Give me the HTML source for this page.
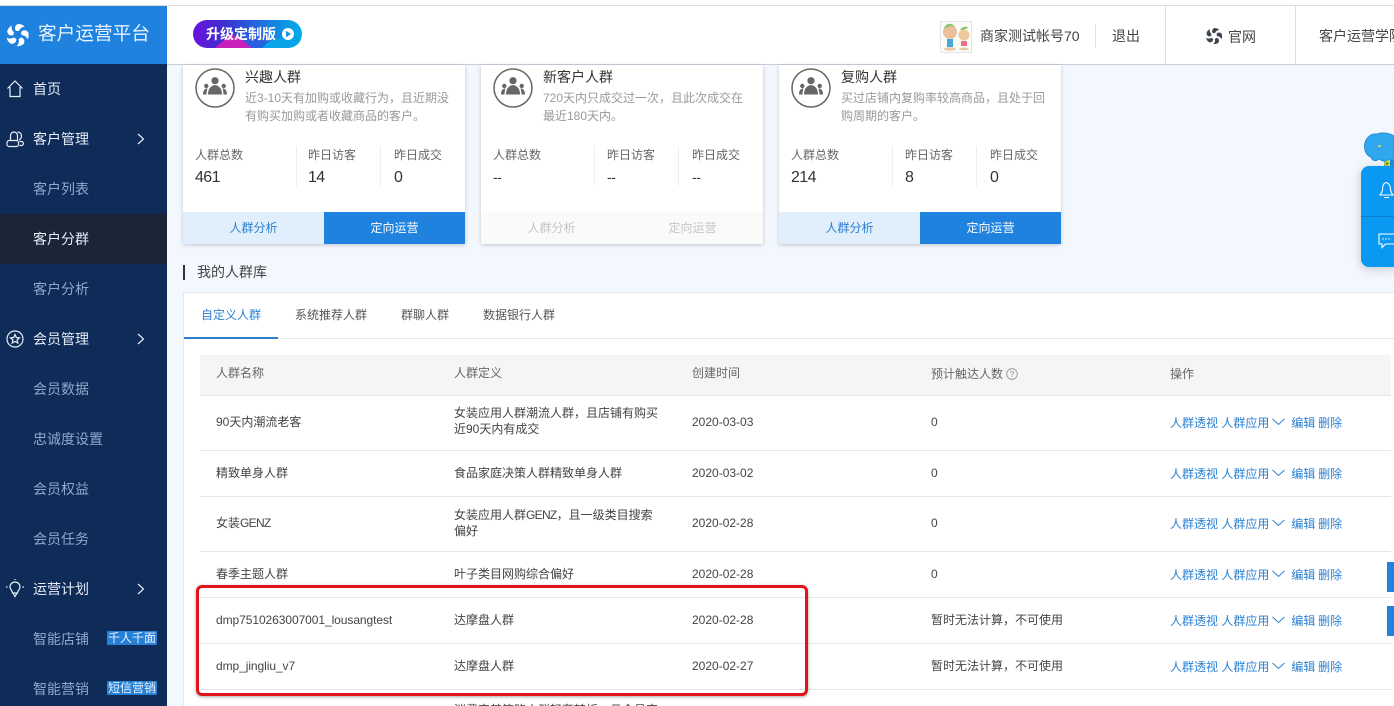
<!DOCTYPE html>
<html lang="zh"><head><meta charset="utf-8"><title>客户分群</title>
<style>
*{box-sizing:border-box;margin:0;padding:0}
html,body{width:1394px;height:706px;overflow:hidden;background:#f3f7fe}
body{position:relative;font-family:"Liberation Sans","Noto Sans CJK SC",sans-serif;font-size:12px;color:#333}
.a,.t{position:absolute;white-space:nowrap}
.t{line-height:18px}
svg{position:absolute;overflow:visible}
.side{font-size:14px;color:#8fa8cb;left:33px}
.side.w{color:#e6edf7}
.card{position:absolute;top:65px;width:282px;height:179px;background:#fff;box-shadow:0 1px 4px rgba(0,0,0,.2)}
.card .t{position:absolute}
.ttl{font-size:14px;color:#333;left:62px;top:3px}
.desc{color:#999;left:62px;white-space:nowrap}
.lb{color:#666;top:81px}
.nm{font-size:16px;color:#333;top:103px;letter-spacing:-.6px;line-height:20px}
.nm.d{font-size:14px;letter-spacing:-.4px;top:102px}
.dv{position:absolute;top:81px;width:1px;height:40px;background:#eee}
.b1,.b2{position:absolute;top:147px;height:32px;line-height:32px;text-align:center}
.b1{left:0;width:141px;background:#e1eefb;color:#2f80d0}
.b2{left:141px;width:141px;background:#1f82de;color:#fff}
.off .b1,.off .b2{background:#fafafa;color:#c4c4c4}
.line{position:absolute;left:200px;width:1191px;height:1px;background:#e6e6e6}
.c{color:#444;font-size:12px}
.n{letter-spacing:-.7px}
.op{position:absolute;left:1170px;color:#2b82d4;white-space:nowrap;line-height:18px}
.op span{margin-left:22px;word-spacing:-.5px}
.tag{position:absolute;left:107px;width:50px;height:14px;background:#2680d6;color:#e8f2fc;font-size:12px;line-height:14px;text-align:center;border-radius:1px}
.ic{stroke:#e8eef7;fill:none;stroke-width:1.2}
</style></head><body>

<div class="a" style="left:0;top:0;width:1394px;height:6px;background:#fff;border-bottom:1px solid #ddd"></div>
<div class="a" style="left:167px;top:6px;width:1227px;height:59px;background:#fff;border-bottom:1px solid #ccd"></div>

<div class="a" style="left:0;top:6px;width:167px;height:58px;background:#1f82de"></div>
<div class="a" style="left:0;top:64px;width:167px;height:642px;background:#0f2c58"></div>
<div class="a" style="left:0;top:214px;width:167px;height:50px;background:#1a2538"></div>

<svg style="left:6px;top:24px" width="23" height="22" viewBox="-11.500 -11.500 23 23" fill="#fff">
<path d="M-1.500-4.200C-3.500-6.500-3-10 .5-11.500 3.500-11.500 6-10.500 7.500-8.800 4.800-8.500 2.500-6.800 1.500-4.200Z"/>
<path d="M-1.500-4.200C-3.500-6.500-3-10 .5-11.500 3.500-11.500 6-10.500 7.500-8.800 4.800-8.500 2.500-6.800 1.500-4.200Z" transform="rotate(72)"/>
<path d="M-1.500-4.200C-3.500-6.500-3-10 .5-11.500 3.500-11.500 6-10.500 7.500-8.800 4.800-8.500 2.500-6.800 1.500-4.200Z" transform="rotate(144)"/>
<path d="M-1.500-4.200C-3.500-6.500-3-10 .5-11.500 3.500-11.500 6-10.500 7.500-8.800 4.800-8.500 2.500-6.800 1.500-4.200Z" transform="rotate(216)"/>
<path d="M-1.500-4.200C-3.500-6.500-3-10 .5-11.500 3.500-11.500 6-10.500 7.500-8.800 4.800-8.500 2.500-6.800 1.500-4.200Z" transform="rotate(288)"/></svg>
<div class="t" style="left:38px;top:22px;font-size:18.670px;line-height:24px;color:#e8f2fc">客户运营平台</div>

<svg style="left:7px;top:80px" width="16" height="18" viewBox="0 0 16 18"><path class="ic" d="M.5 8.500L8 1l7.500 7.500M3 7v9.500h10V7"/></svg>
<div class="t side w" style="top:80px">首页</div>
<svg style="left:6px;top:130px" width="18" height="18" viewBox="0 0 18 18"><path class="ic" d="M4.500 10V5.500a3.500 3.500 0 0 1 7 0V10M3 10.500h7.500c2.800 0 2.800 6 0 6H3c-2.800 0-2.800-6 0-6zM11.500 2c2.500 0 4 1.800 4 4 0 1.800-.8 3.200-2.500 4M13.500 11.500h2c2.500 0 2.500 4 0 4h-2"/></svg>
<div class="t side w" style="top:130px">客户管理</div>
<svg style="left:137px;top:133px" width="8" height="12" viewBox="0 0 8 12"><path class="ic" d="M1 1l5.500 5L1 11"/></svg>
<div class="t side" style="top:180px">客户列表</div>
<div class="t side w" style="top:230px">客户分群</div>
<div class="t side" style="top:280px">客户分析</div>
<svg style="left:6px;top:330px" width="18" height="18" viewBox="0 0 18 18"><circle class="ic" cx="9" cy="9" r="8"/><path class="ic" d="M9 4.500l1.300 3 3.200.3-2.400 2.100.7 3.100L9 11.400 6.200 13l.7-3.100-2.400-2.100 3.200-.3z"/></svg>
<div class="t side w" style="top:330px">会员管理</div>
<svg style="left:137px;top:333px" width="8" height="12" viewBox="0 0 8 12"><path class="ic" d="M1 1l5.500 5L1 11"/></svg>
<div class="t side" style="top:380px">会员数据</div>
<div class="t side" style="top:430px">忠诚度设置</div>
<div class="t side" style="top:480px">会员权益</div>
<div class="t side" style="top:530px">会员任务</div>
<svg style="left:6px;top:580px" width="18" height="18" viewBox="0 0 18 18"><path class="ic" d="M6.500 13c0-2.500-2.500-3.500-2.500-6a5 5 0 0 1 10 0c0 2.500-2.500 3.500-2.500 6zM7 13l2 3.500 2-3.500M9 -1v1M0 7h1.500M16.500 7H18"/></svg>
<div class="t side w" style="top:580px">运营计划</div>
<svg style="left:137px;top:583px" width="8" height="12" viewBox="0 0 8 12"><path class="ic" d="M1 1l5.500 5L1 11"/></svg>
<div class="t side" style="top:630px">智能店铺</div>
<div class="tag" style="top:631px">千人千面</div>
<div class="t side" style="top:680px">智能营销</div>
<div class="tag" style="top:681px">短信营销</div>

<svg style="left:193px;top:20px" width="109" height="28" viewBox="0 0 109 28"><defs><linearGradient id="g" x1="0" x2="1" y1="0" y2="0"><stop offset="0" stop-color="#6a12dc"/><stop offset=".3" stop-color="#3a30d0"/><stop offset=".6" stop-color="#1f6cdc"/><stop offset="1" stop-color="#04aeea"/></linearGradient><clipPath id="cp"><rect width="109" height="28" rx="14"/></clipPath></defs><g clip-path="url(#cp)"><rect width="109" height="28" fill="url(#g)"/><path d="M22 28L38 14l12 6 10 8z" fill="#c820b8"/><path d="M45 16L62 6l20 12-16 10H58z" fill="#2a5ce0" opacity=".8"/><path d="M70 28C75 18 90 16 109 20v8z" fill="#08a4e8"/></g><circle cx="95" cy="14" r="6" fill="#fff"/><path d="M93 10.800v6.400l5-3.200z" fill="#1890e0"/></svg>
<div class="t" style="left:206px;top:25px;font-size:14px;font-weight:bold;color:#fff">升级定制版</div>

<svg style="left:940px;top:21px" width="32" height="32" viewBox="0 0 32 32"><rect x=".5" y=".5" width="31" height="31" fill="#fbfbf8" stroke="#e6e6e6"/><circle cx="10" cy="11" r="7" fill="#ecc09a"/><path d="M4 8c1-6 8-7 11-2-3-1-7-1-11 2z" fill="#8cc56a"/><rect x="7" y="18" width="6" height="8" fill="#45a8d8"/><ellipse cx="10" cy="28" rx="6" ry="1.800" fill="#e8ccaa"/><circle cx="24" cy="14" r="5.500" fill="#f0c8a0"/><path d="M20 9c1-2 5-4 8-3-1 2-5 3-8 3z" fill="#7cc060"/><rect x="21" y="20" width="6" height="5" fill="#ea7088"/><ellipse cx="24" cy="28" rx="5" ry="1.500" fill="#e8ccaa"/></svg>
<div class="t" style="left:980px;top:27px;font-size:14px;color:#444">商家测试帐号70</div>
<div class="a" style="left:1095px;top:24px;width:1px;height:24px;background:#e3e3e3"></div>
<div class="t" style="left:1112px;top:27px;font-size:14px;color:#444">退出</div>
<div class="a" style="left:1165px;top:6px;width:1px;height:59px;background:#ddd"></div>
<div class="a" style="left:1295px;top:6px;width:1px;height:59px;background:#ddd"></div>
<svg style="left:1206px;top:28px" width="16" height="16" viewBox="-11.500 -11.500 23 23" fill="#3d4450">
<path d="M-1.500-4.200C-3.500-6.500-3-10 .5-11.500 3.500-11.500 6-10.500 7.500-8.800 4.800-8.500 2.500-6.800 1.500-4.200Z"/>
<path d="M-1.500-4.200C-3.500-6.500-3-10 .5-11.500 3.500-11.500 6-10.500 7.500-8.800 4.800-8.500 2.500-6.800 1.500-4.200Z" transform="rotate(72)"/>
<path d="M-1.500-4.200C-3.500-6.500-3-10 .5-11.500 3.500-11.500 6-10.500 7.500-8.800 4.800-8.500 2.500-6.800 1.500-4.200Z" transform="rotate(144)"/>
<path d="M-1.500-4.200C-3.500-6.500-3-10 .5-11.500 3.500-11.500 6-10.500 7.500-8.800 4.800-8.500 2.500-6.800 1.500-4.200Z" transform="rotate(216)"/>
<path d="M-1.500-4.200C-3.500-6.500-3-10 .5-11.500 3.500-11.500 6-10.500 7.500-8.800 4.800-8.500 2.500-6.800 1.500-4.200Z" transform="rotate(288)"/></svg>
<div class="t" style="left:1228px;top:28px;font-size:14px;color:#444">官网</div>
<div class="t" style="left:1319px;top:27px;font-size:14px;color:#444">客户运营学院</div>

<div class="card" style="left:183px">
<svg style="left:12px;top:3px" width="40" height="40" viewBox="0 0 40 40"><circle cx="20" cy="20" r="19" fill="none" stroke="#666" stroke-width="1.500"/><circle cx="20" cy="12.700" r="3.600" fill="#666"/><path d="M13 26.500C13 14 27 14 27 26.500z" fill="#666"/><circle cx="11.300" cy="18" r="2.200" fill="#666"/><path d="M8 26.500c0-4.500 2-6 4.500-6-.5 1.500-1 3.500-1 6z" fill="#666"/><circle cx="28.700" cy="18" r="2.200" fill="#666"/><path d="M32 26.500c0-4.500-2-6-4.500-6 .5 1.500 1 3.500 1 6z" fill="#666"/></svg>
<div class="t ttl">兴趣人群</div>
<div class="t desc" style="top:24px">近3-10天有加购或收藏行为，且近期没</div>
<div class="t desc" style="top:42px">有购买加购或者收藏商品的客户。</div>
<div class="t lb" style="left:12px">人群总数</div><div class="t nm" style="left:12px">461</div>
<div class="dv" style="left:113px"></div>
<div class="t lb" style="left:125px">昨日访客</div><div class="t nm" style="left:125px">14</div>
<div class="dv" style="left:197px"></div>
<div class="t lb" style="left:211px">昨日成交</div><div class="t nm" style="left:211px">0</div>
<div class="b1">人群分析</div><div class="b2">定向运营</div>
</div>

<div class="card off" style="left:481px">
<svg style="left:12px;top:3px" width="40" height="40" viewBox="0 0 40 40"><circle cx="20" cy="20" r="19" fill="none" stroke="#666" stroke-width="1.500"/><circle cx="20" cy="12.700" r="3.600" fill="#666"/><path d="M13 26.500C13 14 27 14 27 26.500z" fill="#666"/><circle cx="11.300" cy="18" r="2.200" fill="#666"/><path d="M8 26.500c0-4.500 2-6 4.500-6-.5 1.500-1 3.500-1 6z" fill="#666"/><circle cx="28.700" cy="18" r="2.200" fill="#666"/><path d="M32 26.500c0-4.500-2-6-4.500-6 .5 1.500 1 3.500 1 6z" fill="#666"/></svg>
<div class="t ttl">新客户人群</div>
<div class="t desc" style="top:24px">720天内只成交过一次，且此次成交在</div>
<div class="t desc" style="top:42px">最近180天内。</div>
<div class="t lb" style="left:12px">人群总数</div><div class="t nm d" style="left:12px">--</div>
<div class="dv" style="left:113px"></div>
<div class="t lb" style="left:126px">昨日访客</div><div class="t nm d" style="left:126px">--</div>
<div class="dv" style="left:197px"></div>
<div class="t lb" style="left:211px">昨日成交</div><div class="t nm d" style="left:211px">--</div>
<div class="b1">人群分析</div><div class="b2">定向运营</div>
</div>

<div class="card" style="left:779px">
<svg style="left:12px;top:3px" width="40" height="40" viewBox="0 0 40 40"><circle cx="20" cy="20" r="19" fill="none" stroke="#666" stroke-width="1.500"/><circle cx="20" cy="12.700" r="3.600" fill="#666"/><path d="M13 26.500C13 14 27 14 27 26.500z" fill="#666"/><circle cx="11.300" cy="18" r="2.200" fill="#666"/><path d="M8 26.500c0-4.500 2-6 4.500-6-.5 1.500-1 3.500-1 6z" fill="#666"/><circle cx="28.700" cy="18" r="2.200" fill="#666"/><path d="M32 26.500c0-4.500-2-6-4.500-6 .5 1.500 1 3.500 1 6z" fill="#666"/></svg>
<div class="t ttl">复购人群</div>
<div class="t desc" style="top:24px">买过店铺内复购率较高商品，且处于回</div>
<div class="t desc" style="top:42px">购周期的客户。</div>
<div class="t lb" style="left:12px">人群总数</div><div class="t nm" style="left:12px">214</div>
<div class="dv" style="left:113px"></div>
<div class="t lb" style="left:126px">昨日访客</div><div class="t nm" style="left:126px">8</div>
<div class="dv" style="left:197px"></div>
<div class="t lb" style="left:211px">昨日成交</div><div class="t nm" style="left:211px">0</div>
<div class="b1">人群分析</div><div class="b2">定向运营</div>
</div>

<svg style="left:1364px;top:131px" width="30" height="40" viewBox="0 0 30 40"><rect x="20" y="28" width="3" height="9" fill="#1f8ed8"/><rect x="26" y="28" width="4" height="9" fill="#1f8ed8"/><path d="M.5 14C1 7 7 2 13 3c5-2 13-1 17 2v24h-6c-4 2-6 1-9-1-3 3-7 2-8-2C3 25 0 20 .5 14z" fill="#2fa8f0" stroke="#1d86d0" stroke-width=".8"/><path d="M14 15.500l3-.7" stroke="#f0e050" stroke-width="1.400"/><circle cx="23" cy="32.500" r="3" fill="#c5d630"/><circle cx="23" cy="32.500" r="1" fill="#3a6a20"/></svg>
<div class="a" style="left:1361px;top:166px;width:40px;height:101px;background:#0a99f2;border-radius:8px;box-shadow:0 2px 10px rgba(0,0,0,.2)"></div>
<div class="a" style="left:1361px;top:216px;width:33px;height:1px;background:#0a7fd0"></div>
<svg style="left:1379px;top:182px" width="15" height="17" viewBox="0 0 15 17"><path d="M7 .5c-3.500 1-3.500 5-3.500 7S2 12 1 13h13c-1-1-2.500-3.500-2.500-5.500S11 1.500 7 .5zM5 15.500h5" fill="none" stroke="#fff" stroke-width="1.100"/></svg>
<svg style="left:1378px;top:233px" width="16" height="16" viewBox="0 0 16 16"><path d="M16 1H1v10h3v3.500L7.500 11H16" fill="none" stroke="#fff" stroke-width="1.100"/><circle cx="5" cy="6" r=".7" fill="#fff"/><circle cx="8" cy="6" r=".7" fill="#fff"/><circle cx="11" cy="6" r=".7" fill="#fff"/></svg>

<div class="a" style="left:183px;top:265px;width:2px;height:15px;background:#333"></div>
<div class="t" style="left:197px;top:263px;font-size:14px;color:#444">我的人群库</div>

<div class="a" style="left:183px;top:292px;width:1211px;height:414px;background:#fff;border:1px solid #e4e8ee;border-right:0;border-bottom:0"></div>
<div class="a" style="left:184px;top:338px;width:1210px;height:1px;background:#e6e6e6"></div>
<div class="a" style="left:184px;top:337px;width:94px;height:2px;background:#2f7fc8"></div>
<div class="t" style="left:201px;top:306px;color:#2b82d4">自定义人群</div>
<div class="t" style="left:295px;top:306px;color:#555">系统推荐人群</div>
<div class="t" style="left:401px;top:306px;color:#555">群聊人群</div>
<div class="t" style="left:483px;top:306px;color:#555">数据银行人群</div>

<div class="a" style="left:200px;top:355px;width:1191px;height:40px;background:#f5f5f5"></div>
<div class="t c" style="left:216px;top:364px;color:#666">人群名称</div>
<div class="t c" style="left:454px;top:364px;color:#666">人群定义</div>
<div class="t c" style="left:692px;top:364px;color:#666">创建时间</div>
<div class="t c" style="left:931px;top:365px;color:#666">预计触达人数</div>
<svg style="left:1006px;top:368px" width="12" height="12" viewBox="0 0 12 12"><circle cx="6" cy="6" r="5.300" fill="none" stroke="#888" stroke-width=".8"/><text x="6" y="9" font-size="8" text-anchor="middle" fill="#888" font-family="Liberation Sans">?</text></svg>
<div class="t c" style="left:1170px;top:365px;color:#666">操作</div>

<div class="line" style="top:395px"></div>
<div class="line" style="top:450px"></div>
<div class="line" style="top:496px"></div>
<div class="line" style="top:551px"></div>
<div class="line" style="top:597px"></div>
<div class="line" style="top:643px"></div>
<div class="line" style="top:689px"></div>

<div class="t c" style="left:216px;top:413px">90天内潮流老客</div>
<div class="t c" style="left:454px;top:405px;line-height:16px">女装应用人群潮流人群，且店铺有购买<br>近90天内有成交</div>
<div class="t c" style="left:692px;top:413px">2020-03-03</div>
<div class="t c" style="left:931px;top:413px">0</div>

<div class="t c" style="left:216px;top:464px">精致单身人群</div>
<div class="t c" style="left:454px;top:464px">食品家庭决策人群精致单身人群</div>
<div class="t c" style="left:692px;top:464px">2020-03-02</div>
<div class="t c" style="left:931px;top:464px">0</div>

<div class="t c" style="left:216px;top:514px">女装<span class="n">GENZ</span></div>
<div class="t c" style="left:454px;top:507px;line-height:16px">女装应用人群<span class="n">GENZ</span>，且一级类目搜索<br>偏好</div>
<div class="t c" style="left:692px;top:514px">2020-02-28</div>
<div class="t c" style="left:931px;top:514px">0</div>

<div class="t c" style="left:216px;top:565px">春季主题人群</div>
<div class="t c" style="left:454px;top:565px">叶子类目网购综合偏好</div>
<div class="t c" style="left:692px;top:565px">2020-02-28</div>
<div class="t c" style="left:931px;top:565px">0</div>

<div class="t c" style="left:216px;top:611px;letter-spacing:-.07px">dmp7510263007001_lousangtest</div>
<div class="t c" style="left:454px;top:611px">达摩盘人群</div>
<div class="t c" style="left:692px;top:611px">2020-02-28</div>
<div class="t c" style="left:931px;top:611px">暂时无法计算，不可使用</div>

<div class="t c" style="left:216px;top:657px;letter-spacing:-.07px">dmp_jingliu_v7</div>
<div class="t c" style="left:454px;top:657px">达摩盘人群</div>
<div class="t c" style="left:692px;top:657px">2020-02-27</div>
<div class="t c" style="left:931px;top:657px">暂时无法计算，不可使用</div>

<div class="t c" style="left:454px;top:701px">消费定基策略人群轻奢转折，且会员定</div>

<div class="op" style="top:414px">人群透视 人群应用<svg style="left:102px;top:4px" width="13" height="8" viewBox="0 0 13 8"><path d="M.5 1l6 5.500 6-5.500" fill="none" stroke="#2b82d4"/></svg><span>编辑 删除</span></div>
<div class="op" style="top:465px">人群透视 人群应用<svg style="left:102px;top:4px" width="13" height="8" viewBox="0 0 13 8"><path d="M.5 1l6 5.500 6-5.500" fill="none" stroke="#2b82d4"/></svg><span>编辑 删除</span></div>
<div class="op" style="top:515px">人群透视 人群应用<svg style="left:102px;top:4px" width="13" height="8" viewBox="0 0 13 8"><path d="M.5 1l6 5.500 6-5.500" fill="none" stroke="#2b82d4"/></svg><span>编辑 删除</span></div>
<div class="op" style="top:566px">人群透视 人群应用<svg style="left:102px;top:4px" width="13" height="8" viewBox="0 0 13 8"><path d="M.5 1l6 5.500 6-5.500" fill="none" stroke="#2b82d4"/></svg><span>编辑 删除</span></div>
<div class="op" style="top:612px">人群透视 人群应用<svg style="left:102px;top:4px" width="13" height="8" viewBox="0 0 13 8"><path d="M.5 1l6 5.500 6-5.500" fill="none" stroke="#2b82d4"/></svg><span>编辑 删除</span></div>
<div class="op" style="top:658px">人群透视 人群应用<svg style="left:102px;top:4px" width="13" height="8" viewBox="0 0 13 8"><path d="M.5 1l6 5.500 6-5.500" fill="none" stroke="#2b82d4"/></svg><span>编辑 删除</span></div>

<div class="a" style="left:1387px;top:562px;width:7px;height:30px;background:#1f82de"></div>
<div class="a" style="left:1387px;top:606px;width:7px;height:30px;background:#1f82de"></div>

<div class="a" style="left:196px;top:585px;width:612px;height:111px;border:3px solid #e0141c;border-radius:6px;box-shadow:0 1px 3px rgba(0,0,0,.35)"></div>

</body></html>
